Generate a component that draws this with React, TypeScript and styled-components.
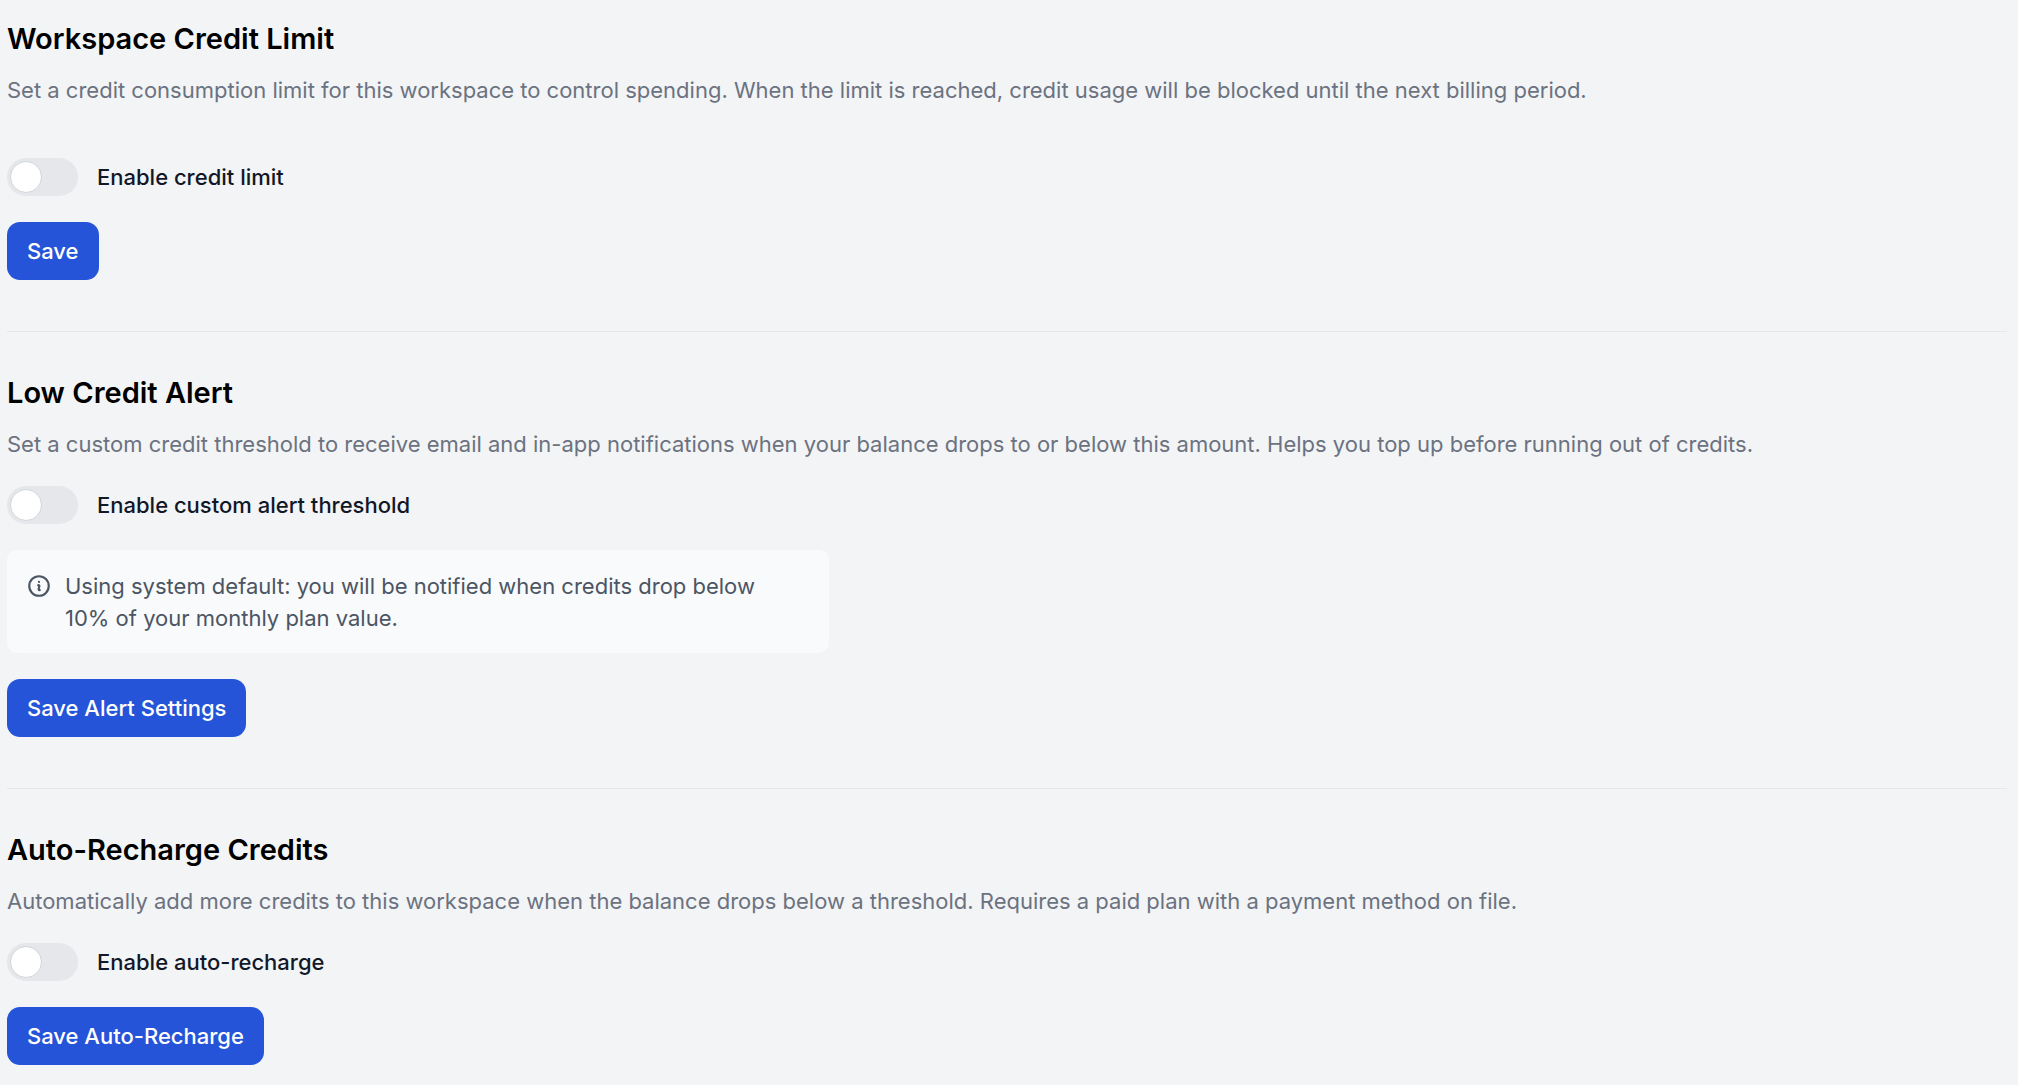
import React, { useId, useState } from 'react';
import styled, { createGlobalStyle } from 'styled-components';

const GlobalStyle = createGlobalStyle`
  *, *::before, *::after { box-sizing: border-box; }
  body {
    margin: 0;
    background: #f3f4f6;
    color: #000;
    font-family: Inter, 'Liberation Sans', sans-serif;
    font-size: 22px;
    line-height: 32px;
  }
`;

const Page = styled.main`
  padding: 16px 11px 20px 7px;
`;

const Section = styled.section`
  display: flex;
  flex-direction: column;
  align-items: flex-start;

  & + & {
    margin-top: 51px;
    padding-top: 38px;
    border-top: 1px solid #e5e7eb;
  }
`;

const Title = styled.h2`
  margin: 0;
  font-size: 29px;
  line-height: 45px;
  font-weight: 600;
`;

const Description = styled.p<{ $roomy?: boolean }>`
  margin: 13px 0 ${({ $roomy }) => ($roomy ? 52 : 26)}px;
  color: #6b7280;
`;

const Controls = styled.div`
  display: flex;
  flex-direction: column;
  align-items: flex-start;
  gap: 26px;
`;

const ToggleRow = styled.div`
  display: flex;
  align-items: center;
  gap: 19px;
`;

const Switch = styled.input`
  appearance: none;
  margin: 0;
  display: flex;
  align-items: center;
  width: 71px;
  height: 38px;
  padding: 3px;
  border-radius: 999px;
  background: #e5e7eb;
  cursor: pointer;

  &::before {
    content: '';
    width: 32px;
    height: 32px;
    border: 1px solid #d1d5db;
    border-radius: 50%;
    background: #fff;
  }

  &:checked {
    justify-content: flex-end;
    background: #2554d8;
  }
`;

const SwitchLabel = styled.label`
  color: #111827;
  font-weight: 500;
`;

const Button = styled.button`
  padding: 13px 20px;
  border: 0;
  border-radius: 13px;
  background: #2554d8;
  color: #fff;
  font: inherit;
  font-weight: 500;
  cursor: pointer;
`;

const Notice = styled.div`
  display: flex;
  gap: 13px;
  max-width: 822px;
  padding: 20px 32px 19px 19px;
  border-radius: 10px;
  background: #f9fafb;
  color: #4b5563;
`;

const NoticeText = styled.p`
  margin: 0;
`;

const InfoIcon = styled.svg`
  flex: none;
  width: 26px;
  height: 26px;
  margin-top: 3px;
`;

function Toggle({ label }: { label: string }) {
  const id = useId();
  const [on, setOn] = useState(false);
  return (
    <ToggleRow>
      <Switch id={id} type="checkbox" role="switch" checked={on} onChange={(e) => setOn(e.target.checked)} />
      <SwitchLabel htmlFor={id}>{label}</SwitchLabel>
    </ToggleRow>
  );
}

export default function App() {
  return (
    <>
      <GlobalStyle />
      <Page>
        <Section>
          <Title>Workspace Credit Limit</Title>
          <Description $roomy>
            Set a credit consumption limit for this workspace to control spending. When the limit is reached, credit
            usage will be blocked until the next billing period.
          </Description>
          <Controls>
            <Toggle label="Enable credit limit" />
            <Button type="button">Save</Button>
          </Controls>
        </Section>
        <Section>
          <Title>Low Credit Alert</Title>
          <Description>
            Set a custom credit threshold to receive email and in-app notifications when your balance drops to or below
            this amount. Helps you top up before running out of credits.
          </Description>
          <Controls>
            <Toggle label="Enable custom alert threshold" />
            <Notice>
              <InfoIcon
                viewBox="0 0 24 24"
                fill="none"
                stroke="currentColor"
                strokeWidth="2"
                strokeLinecap="round"
                strokeLinejoin="round"
                aria-hidden="true"
              >
                <path d="M11.25 11.25l.041-.02a.75.75 0 011.063.852l-.708 2.836a.75.75 0 001.063.853l.041-.021M21 12a9 9 0 11-18 0 9 9 0 0118 0zm-9-3.75h.008v.008H12V8.25z" />
              </InfoIcon>
              <NoticeText>
                Using system default: you will be notified when credits drop below 10% of your monthly plan value.
              </NoticeText>
            </Notice>
            <Button type="button">Save Alert Settings</Button>
          </Controls>
        </Section>
        <Section>
          <Title>Auto-Recharge Credits</Title>
          <Description>
            Automatically add more credits to this workspace when the balance drops below a threshold. Requires a paid
            plan with a payment method on file.
          </Description>
          <Controls>
            <Toggle label="Enable auto-recharge" />
            <Button type="button">Save Auto-Recharge</Button>
          </Controls>
        </Section>
      </Page>
    </>
  );
}
